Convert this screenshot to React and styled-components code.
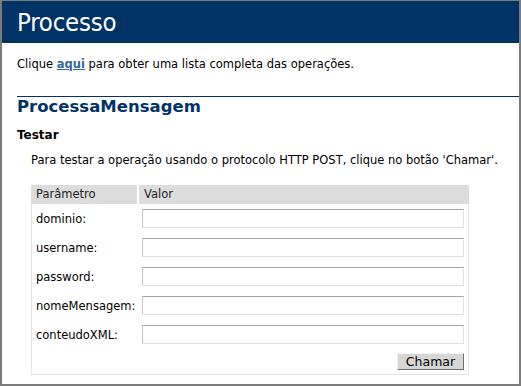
import React from 'react';
import styled, { createGlobalStyle } from 'styled-components';

const GlobalStyle = createGlobalStyle`
  html, body {
    margin: 0;
    padding: 0;
    background: #fff;
  }
  body {
    font-family: "DejaVu Sans", Verdana, sans-serif;
    font-size: 11.5px;
    color: #000;
  }
`;

const Frame = styled.div`
  box-sizing: border-box;
  width: 521px;
  height: 386px;
  border-style: solid;
  border-color: #7b7b7b;
  border-width: 1px 2px 2px 2px;
  background: #fff;
  overflow: hidden;
`;

const Header = styled.h1`
  margin: 0;
  height: 42px;
  background: #003366;
  color: #fff;
  font-family: "DejaVu Sans Condensed", "DejaVu Sans", sans-serif;
  font-weight: normal;
  font-size: 25.5px;
  line-height: 42px;
  padding-left: 15px;
  letter-spacing: -0.2px;
`;

const Content = styled.div`
  padding-left: 15px;
`;

const Intro = styled.p`
  margin: 14px 0 0;
  line-height: 14px;
`;

const Link = styled.a`
  color: #336699;
  font-weight: bold;
  text-decoration: underline;
`;

const Rule = styled.hr`
  margin: 25px 0 0;
  border: none;
  border-top: 1px solid #003366;
  height: 0;
`;

const OpTitle = styled.h2`
  margin: 1px 0 0;
  font-size: 16.5px;
  line-height: 18px;
  font-weight: bold;
  color: #003366;
`;

const SubTitle = styled.h3`
  margin: 12px 0 0;
  font-size: 12px;
  line-height: 14px;
  font-weight: bold;
  color: #000;
`;

const Indent = styled.div`
  padding-left: 14px;
`;

const Note = styled.p`
  margin: 11px 0 0;
  line-height: 14px;
`;

const ParamTable = styled.div`
  box-sizing: border-box;
  margin-top: 18px;
  width: 438px;
  border: 1px solid #e3e3e3;
  border-top: none;
`;

const HeadRow = styled.div`
  display: grid;
  grid-template-columns: 106px 1fr;
  column-gap: 2px;
  height: 19px;
  margin: 0 -1px;
`;

const HeadCell = styled.div`
  background: #dcdcdc;
  color: #222;
  line-height: 19px;
  padding-left: 5px;
`;

const Row = styled.div`
  display: grid;
  grid-template-columns: 107px 1fr;
  align-items: center;
  height: 29px;
`;

const Label = styled.label`
  padding-left: 4px;
`;

const Field = styled.input`
  box-sizing: border-box;
  margin-left: 3px;
  width: 322px;
  height: 19px;
  border: 1px solid #e2e2e2;
  border-top-color: #a5a5a5;
  border-left-color: #c8c8c8;
  background: #fff;
  padding: 0 2px;
  font: inherit;
  outline: none;
`;

const Actions = styled.div`
  display: flex;
  justify-content: flex-end;
  padding: 4px 4px 4px 0;
`;

const Button = styled.button`
  box-sizing: border-box;
  width: 67px;
  height: 17px;
  padding: 0;
  background: #d6d6d6;
  border: 1px solid;
  border-color: #f4f4f4 #6f6f6f #6f6f6f #f4f4f4;
  font-family: "DejaVu Sans", Verdana, sans-serif;
  font-size: 12.5px;
  line-height: 15px;
  color: #000;
`;

const params = ['dominio', 'username', 'password', 'nomeMensagem', 'conteudoXML'];

export default function App() {
  return (
    <Frame>
      <GlobalStyle />
      <Header>Processo</Header>
      <Content>
        <Intro>
          Clique <Link href="#">aqui</Link> para obter uma lista completa das operações.
        </Intro>
        <Rule />
        <OpTitle>ProcessaMensagem</OpTitle>
        <SubTitle>Testar</SubTitle>
        <Indent>
          <Note>Para testar a operação usando o protocolo HTTP POST, clique no botão 'Chamar'.</Note>
          <ParamTable>
            <HeadRow>
              <HeadCell>Parâmetro</HeadCell>
              <HeadCell>Valor</HeadCell>
            </HeadRow>
            {params.map((p) => (
              <Row key={p}>
                <Label htmlFor={p}>{p}:</Label>
                <Field id={p} type="text" />
              </Row>
            ))}
            <Actions>
              <Button type="button">Chamar</Button>
            </Actions>
          </ParamTable>
        </Indent>
      </Content>
    </Frame>
  );
}
